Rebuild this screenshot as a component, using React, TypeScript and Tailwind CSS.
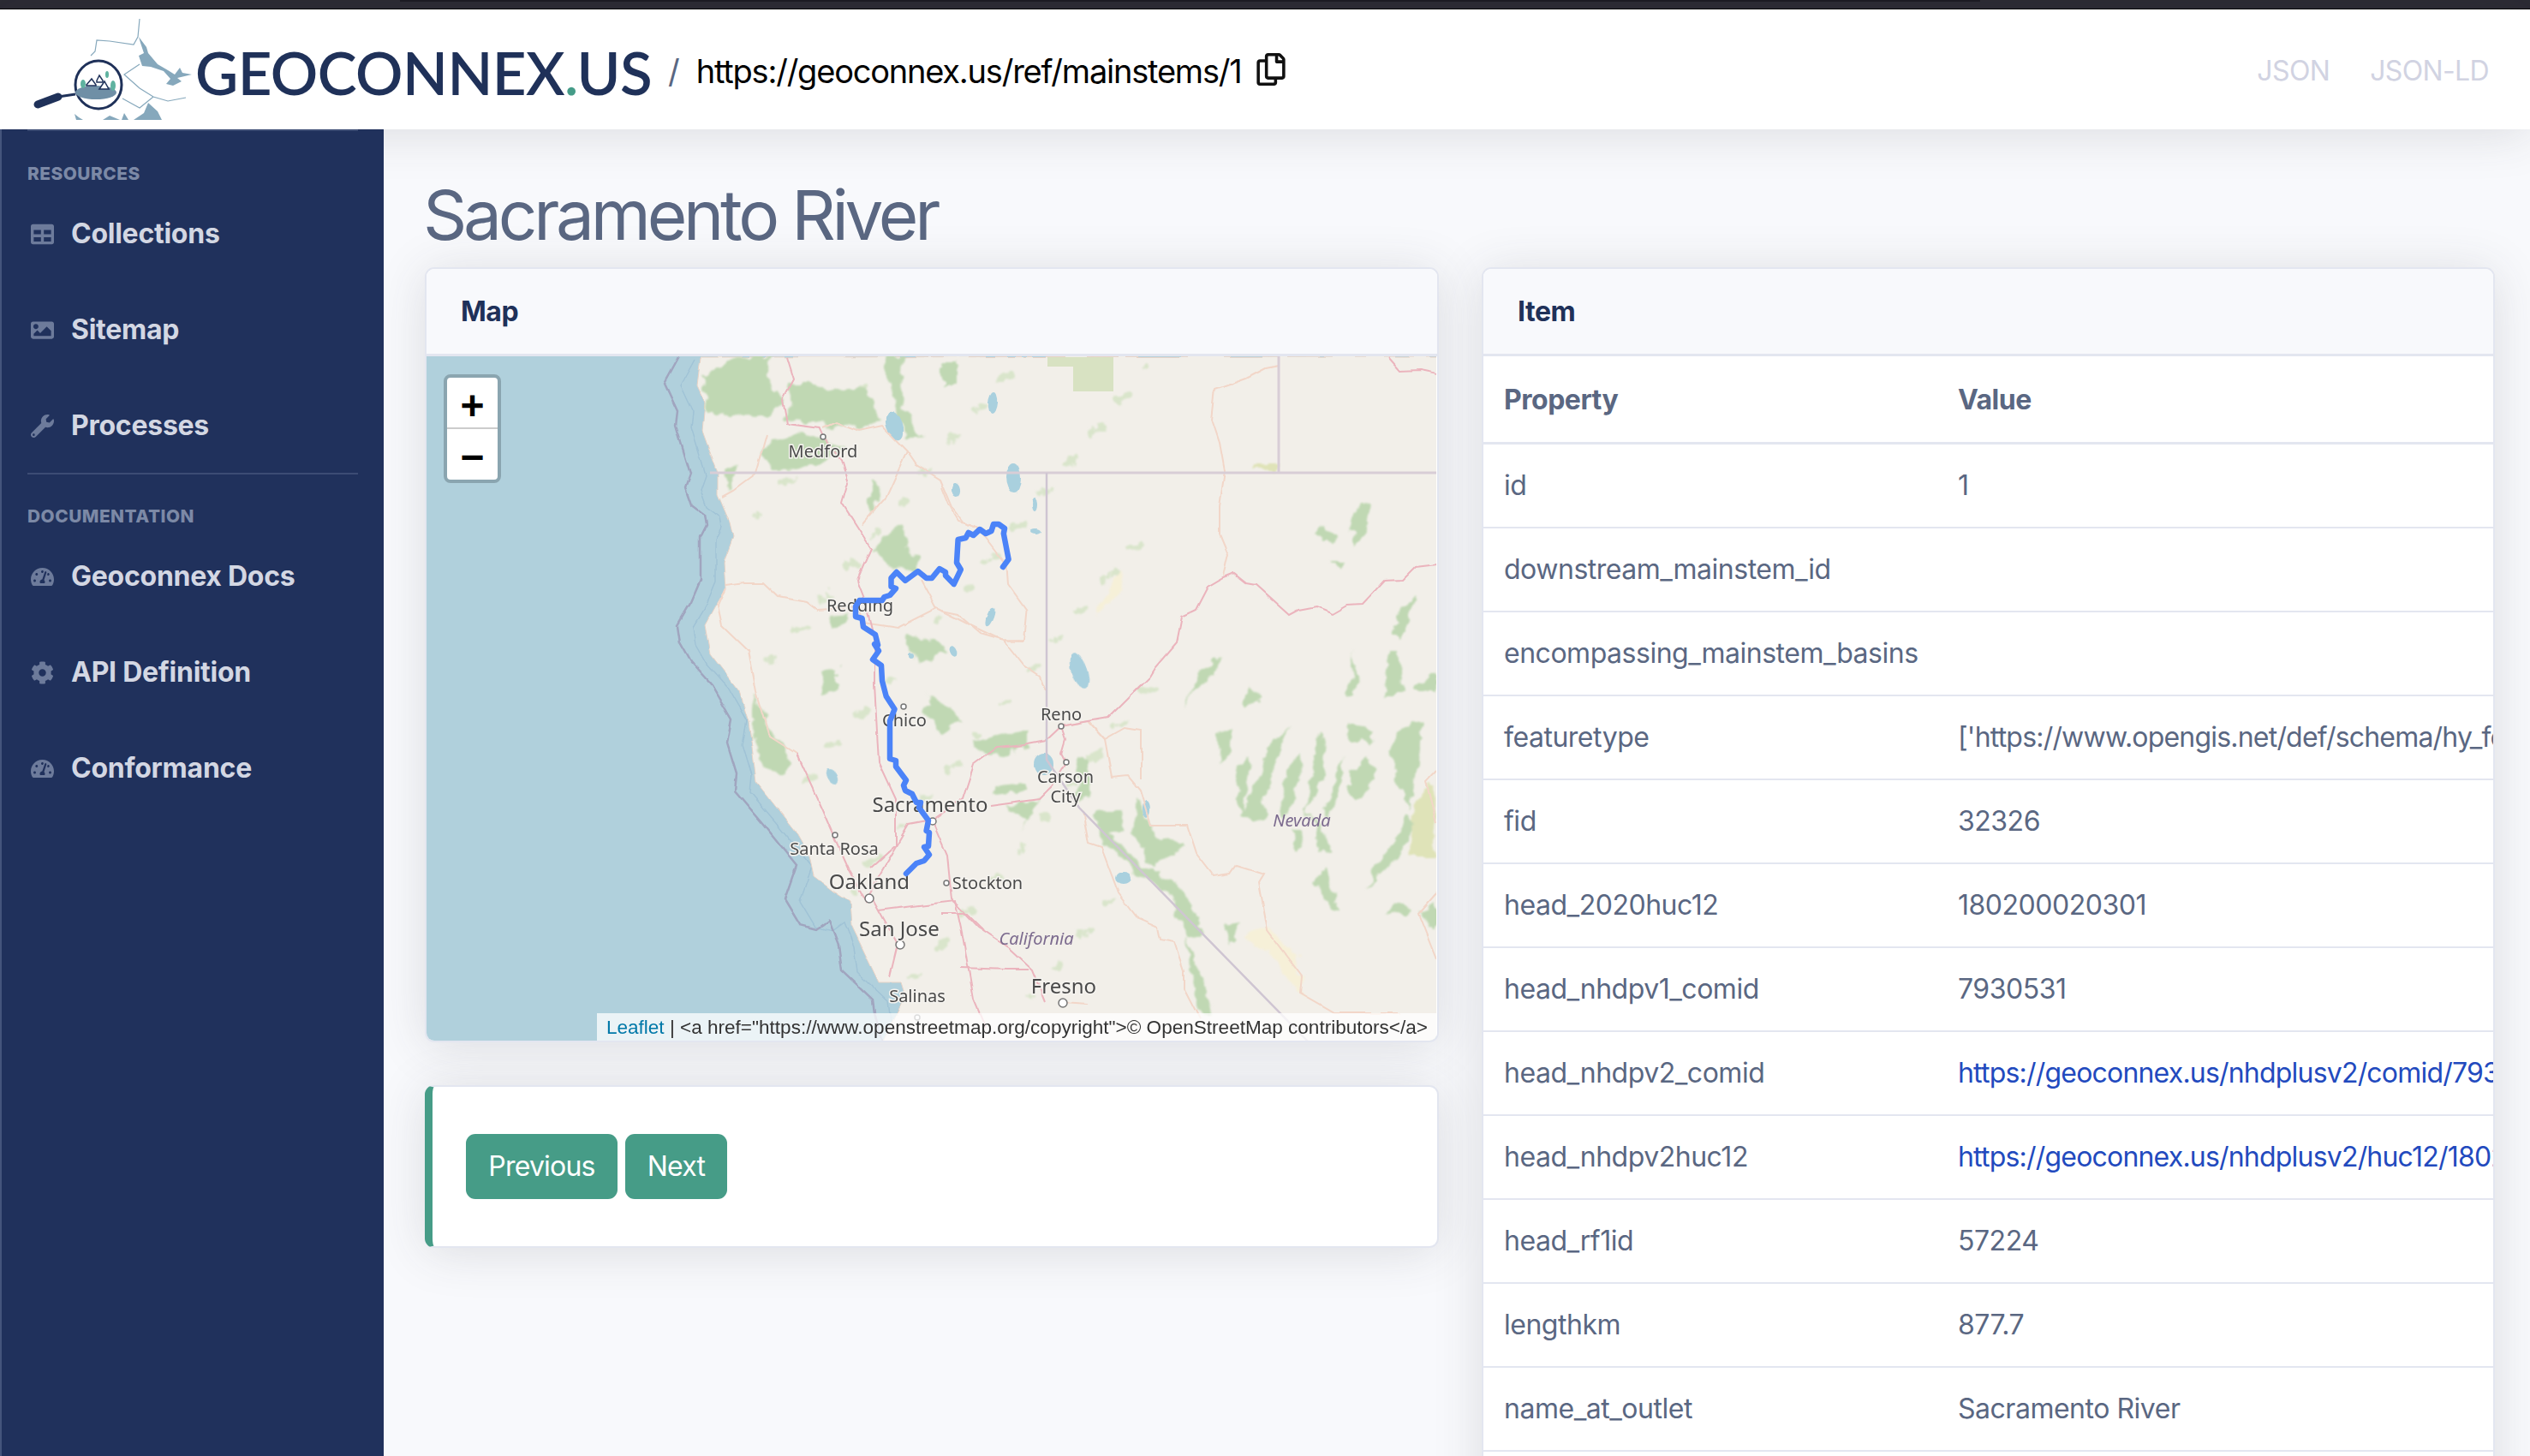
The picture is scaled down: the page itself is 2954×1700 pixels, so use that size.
import { FaCog, FaImage, FaRegCopy, FaTable, FaTachometerAlt, FaWrench } from 'react-icons/fa';

const resources = [
  { name: 'Collections', icon: FaTable },
  { name: 'Sitemap', icon: FaImage },
  { name: 'Processes', icon: FaWrench },
];

const docs = [
  { name: 'Geoconnex Docs', icon: FaTachometerAlt },
  { name: 'API Definition', icon: FaCog },
  { name: 'Conformance', icon: FaTachometerAlt },
];

const rows: { key: string; value?: string; link?: boolean; tight?: boolean }[] = [
  { key: 'id', value: '1' },
  { key: 'downstream_mainstem_id' },
  { key: 'encompassing_mainstem_basins' },
  { key: 'featuretype', value: "['https://www.opengis.net/def/schema/hy_features/hyf/HY_FlowPath']", tight: true },
  { key: 'fid', value: '32326' },
  { key: 'head_2020huc12', value: '180200020301' },
  { key: 'head_nhdpv1_comid', value: '7930531' },
  { key: 'head_nhdpv2_comid', value: 'https://geoconnex.us/nhdplusv2/comid/7930531', link: true, tight: true },
  { key: 'head_nhdpv2huc12', value: 'https://geoconnex.us/nhdplusv2/huc12/180200020301', link: true, tight: true },
  { key: 'head_rf1id', value: '57224' },
  { key: 'lengthkm', value: '877.7' },
  { key: 'name_at_outlet', value: 'Sacramento River' },
  { key: '' },
];

// map data, in page pixels
const land =
  '819,417 815,450 824,470 821,503 839,553 839,577 853,610 857,627 846,657 848,687 835,710 824,730 830,763 864,807 875,843 879,873 884,913 929,970 946,1000 951,1023 973,1040 993,1053 995,1080 1027,1147 1053,1147 1058,1163 1031,1218 1680,1218 1680,416';
const coast =
  '794,417 777,448 792,480 790,497 807,553 801,570 808,590 824,602 826,613 819,627 819,677 808,703 792,730 795,750 808,773 832,800 855,840 850,867 861,903 859,923 893,963 931,1010 917,1050 935,1080 955,1085 969,1075 980,1103 984,1133 1020,1167 1022,1183 1031,1218';
const river =
  '1172,662 1178.6,653 1172.8,623 1174,617 1167,612 1161,612 1158.5,620 1152,623 1145,618 1137.5,625 1131.7,622 1128.6,628 1119.6,630 1118,657 1122.8,665 1114.7,682 1105,672 1105,668 1098,664 1089,675 1082.6,675 1072.8,667 1058,678 1047.8,668 1041.5,675 1041.5,685 1047,687 1040,695 1033.5,697 1031,701 1004.5,701 1000,708 1000,720 1007.6,722 1009,732 1023,741 1026,753 1022,752 1027,760 1020,770 1030,777 1031,795 1035.7,813 1045.5,828 1040,842 1040,886 1047,888 1047,895 1059,911 1056,917 1058,923 1066,927 1071,937 1076,937 1074,943 1085,958 1082.6,970 1086,972 1085,988 1080,989 1086,998 1080,1005 1071,1008 1059,1020';

const pinkRoads = [
  '1326,807 1343,790 1349,780 1375,750 1381,720 1398,712 1412,685 1429,675 1442,670 1456,681 1467,683 1506,718 1517,712 1538,708 1557,716 1574.5,706 1592,705 1617,678 1638,677 1653,662 1678,659',
  '1622,417 1636,433 1659,432 1678,436',
  '920,417 928,443 915,467 920,495 957.6,500 962,510 984,540 991,563 984,587 1018,640 1002,677 1011,700 1022,743 1022,800 1027,890 1047,933 1047,987 1018,1013',
  '931,880 960,943 973,973 991,1013 1013,1053 1018,1047 1049,1103 1040,1140',
  '1013,1047 1062,963 1089,958 1125,933 1138,893 1165,873 1196,870 1222,865 1240,848 1272,842 1295,838 1333,800',
  '1089,958 1107,1000 1112,1050 1143,1083 1179,1107 1207,1133 1222,1170',
  '1027,1063 1116,1052 1125,1093 1138,1167 1152,1200',
  '1240,848 1245,863 1240,880 1245,890',
  '1157,940 1215,932 1230,917 1245,893',
  '1100,1067 1130,1067 1150,1087',
  '1123,1130 1177,1132 1203,1132',
];

const orangeRoads = [
  '1494,427 1479,430 1456,442 1420,455 1416,490 1425,517 1431,550 1425,590 1425,623 1435,647 1429,673',
  '1100,570 1108,590 1119,608 1142,615 1176.5,660 1178,683 1199.5,713 1196,747 1173,748 1146,740 1119,717 1100,713',
  '1173,748 1196,777 1215,790 1222,807',
  '962,500 978,493 1004,503 1031,497 1060,527 1036,580 1007,613',
  '1060,527 1071,543 1098,560 1112,593 1125,610 1147,617',
  '897,507 884,553 857,573 844,580',
  '848,687 839,707 844,730 875,760 884,807 900,860 931,880',
  '848,683 870,680 893,680 911,697 942,703 955,713 1004,710 1009,727 1049,733 1094,710 1076,677',
  '1094,710 1134,730 1170,747 1196,748',
  '1240,848 1272,842 1291,863 1314,850 1333,853 1333,910',
  '1272,842 1291,863 1299,907 1318,905 1333,923 1345,963 1387,963 1398,997 1418,1023 1437,1020 1444,1010 1477,1020 1471,1030 1481,1087 1521,1140 1519,1160 1559,1183 1636,1183',
  '1265,947 1272,985 1287,990 1307,1043 1330,1073 1353,1083 1356,1097 1372,1100 1383,1133 1383,1153 1402,1190',
  '1242,1170 1272,1172',
  '1678,900 1666,913 1678,960',
  '1678,1043 1657,1067 1678,1120',
];

const greens = [
  '821,437 844,427 853,417 900,417 895,440 913,470 893,490 870,482 853,490 826,477',
  '902,513 960,507 987,527 955,547 902,548 893,530',
  '924,447 951,447 991,457 1013,453 1031,487 996,500 946,493 920,490',
  '1031,417 1058,417 1054,473 1080,510 1058,510 1040,450',
  '1100,420 1117,420 1117,447 1100,447',
  '882,813 893,837 924,890 917,903 897,897 879,857',
  '1083,808 1123,840 1100,857 1080,827',
  '1058,740 1076,743 1107,757 1076,777 1062,763',
  '960,787 980,780 980,803 964,807',
  '1036,627 1054,613 1058,637 1071,650 1071,667 1036,660 1018,643',
  '971,720 991,718 987,730 971,735',
  '1018,558 1029,570 1025,593 1018,597',
  '844,542 862,543 850,573',
  '1134,867 1200,850 1200,877 1165,883 1138,873',
  '1161,917 1200,913 1200,923 1165,928',
  '1190,972 1215,935 1173,943 1199,957',
  '1255,883 1275,885 1275,925 1262,935',
  '1276,947 1307,947 1314,967 1291,970 1326,1000 1341,1013 1376,1030 1406,1090 1391,1093 1364,1043 1330,1020 1291,987',
  '1326,930 1337,950 1353,977 1387,988 1349,1013 1337,1000 1322,973',
  '1387,1090 1395,1120 1410,1143 1418,1183 1402,1183 1389,1133',
  '1429,1080 1452,1077 1444,1097 1435,1102',
  '1421,857 1441,847 1437,877 1425,893',
  '1441,907 1456,883 1460,900 1452,950 1446,943',
  '1506,847 1483,873 1456,940 1448,953 1475,957 1479,933 1498,867',
  '1517,877 1521,910 1502,957 1494,937 1506,900',
  '1540,857 1552,870 1548,903 1525,943 1536,950 1555,993 1540,997 1536,953 1523,947',
  '1571,883 1559,910 1548,947 1555,953 1569,913',
  '1573,847 1605,850 1597,870 1574,863',
  '1597,883 1609,897 1594,933 1578,933 1578,900',
  '1636,853 1662,843 1655,897 1647,943 1636,917 1624,880',
  '1643,953 1655,960 1636,997 1597,1035 1609,1010 1628,987',
  '1550,1013 1563,1060 1555,1062 1536,1030',
  '1620,1067 1640,1055 1651,1063 1636,1070',
  '1506,973 1525,973 1517,992',
  '1395,800 1383,827 1390,815',
  '1588,587 1601,588 1594,617 1596,630 1584,640 1578,610',
  '1540,617 1567,628 1555,637 1538,622',
  '1559,653 1571,653 1565,667',
  '1655,693 1657,700 1636,747 1624,743 1632,720',
  '1624,760 1636,760 1640,810 1617,810',
  '1582,757 1575,810 1584,810',
  '1425,768 1421,787 1391,810 1406,783',
  '1666,787 1678,780 1678,810 1651,810',
  '1460,800 1475,815 1450,830',
  '1660,1063 1678,1050 1678,1085',
];

const paleFields = [
  { points: '1464,543 1494,543 1494,550 1462,550', fill: '#dfe3b8' },
  { points: '1674,917 1678,1000 1647,1000 1655,933', fill: '#dfe3b8' },
  { points: '1483,1083 1517,1120 1525,1167 1483,1117 1452,1093', fill: '#f6f0d8' },
  { points: '1307,670 1314,687 1280,720 1291,693', fill: '#f6f0d8' },
];

const lakes = [
  [1045, 497, 9, 17, -20],
  [1185, 557, 9, 18, 0],
  [1261, 783, 9, 22, -20],
  [1220, 893, 12, 13, 0],
  [1340, 945, 4, 10, 0],
  [1312, 1025, 9, 7, 0],
  [973, 907, 6, 10, -30],
  [1160, 470, 5, 13, 5],
  [1117, 572, 5, 8, -10],
  [1210, 620, 6, 3, 0],
  [1209, 589, 3, 8, 0],
  [1157, 720, 4, 12, 20],
  [1114, 760, 4, 7, -20],
  [1064, 765, 3, 3, 0],
];

const labels = [
  { text: 'Medford', x: 962, y: 534, size: 20 },
  { text: 'Redding', x: 1005, y: 714, size: 20 },
  { text: 'Chico', x: 1057, y: 848, size: 20 },
  { text: 'Sacramento', x: 1087, y: 948, size: 24 },
  { text: 'Santa Rosa', x: 975, y: 998, size: 20 },
  { text: 'Oakland', x: 1016, y: 1038, size: 24 },
  { text: 'Stockton', x: 1154, y: 1038, size: 20 },
  { text: 'San Jose', x: 1051, y: 1093, size: 24 },
  { text: 'Salinas', x: 1072, y: 1170, size: 20 },
  { text: 'Reno', x: 1240, y: 841, size: 20 },
  { text: 'Carson', x: 1245, y: 914, size: 20 },
  { text: 'City', x: 1245, y: 937, size: 20 },
  { text: 'Fresno', x: 1243, y: 1160, size: 24 },
];

const cities = [
  [962, 510, 3],
  [1056, 825, 3],
  [976, 975, 3],
  [1106, 1031, 3],
  [1016, 1049, 5],
  [1052, 1103, 5],
  [1072, 1188, 3],
  [1240, 848, 3],
  [1246, 890, 3],
  [1242, 1171, 5],
  [1090, 959, 4],
];

// scattered pale patches, the mottled vegetation of the tiles; kept on the land side of the coast
const speckles = Array.from({ length: 170 }, (_, i) => {
  const x = 880 + ((i * 197) % 470);
  const y = 425 + ((i * 331) % 760);
  return { x, y, r: 2 + (i % 4) };
}).filter(s => s.x > 880 + Math.max(0, s.y - 850) * 0.6);

function RiverMap() {
  return (
    <svg viewBox="499 416 1179 799" className="block h-[799px] w-[1179px]">
      <defs>
        <filter id="soft">
          <feGaussianBlur stdDeviation="0.7" />
        </filter>
        <filter id="organic" x="-5%" y="-5%" width="110%" height="110%">
          <feTurbulence type="fractalNoise" baseFrequency="0.05" numOctaves="3" seed="4" result="noise" />
          <feDisplacementMap in="SourceGraphic" in2="noise" scale="18" xChannelSelector="R" yChannelSelector="G" />
          <feGaussianBlur stdDeviation="1" />
        </filter>
        <filter id="wiggle" x="-5%" y="-5%" width="110%" height="110%">
          <feTurbulence type="fractalNoise" baseFrequency="0.04" numOctaves="2" seed="9" result="noise" />
          <feDisplacementMap in="SourceGraphic" in2="noise" scale="6" xChannelSelector="R" yChannelSelector="G" />
          <feGaussianBlur stdDeviation="0.6" />
        </filter>
        <filter id="label">
          <feGaussianBlur stdDeviation="0.35" />
        </filter>
      </defs>
      <rect x="499" y="416" width="1179" height="799" fill="#b0d0dc" />
      <g filter="url(#wiggle)">
        <polyline points={coast} fill="none" stroke="#a0c3d6" strokeWidth="1.5" transform="translate(18,2)" />
        <polyline points={coast} fill="none" stroke="#a0a5bf" strokeWidth="2.5" />
        <polygon points={land} fill="#f2efe9" stroke="#e8d3c6" strokeWidth="1" />
      </g>
      <polygon points="1224,417 1301,417 1301,457 1254,457 1254,428 1224,428" fill="#d8e2c2" filter="url(#soft)" />
      <g filter="url(#organic)">
        {paleFields.map(f => (
          <polygon key={f.points} points={f.points} fill={f.fill} />
        ))}
        {speckles.map(s => (
          <circle key={`${s.x}-${s.y}`} cx={s.x} cy={s.y} r={s.r} fill="#d9e5cb" />
        ))}
        {greens.map(g => (
          <polygon key={g} points={g} fill="#c0d8b3" />
        ))}
      </g>
      <g filter="url(#wiggle)">
        {lakes.map(([cx, cy, rx, ry, r]) => (
          <ellipse
            key={`${cx}-${cy}`}
            cx={cx}
            cy={cy}
            rx={rx}
            ry={ry}
            fill="#a9d0de"
            transform={`rotate(${r} ${cx} ${cy})`}
          />
        ))}
        {orangeRoads.map(r => (
          <polyline key={r} points={r} fill="none" stroke="#f2d6c8" strokeWidth="2" />
        ))}
        {pinkRoads.map(r => (
          <polyline key={r} points={r} fill="none" stroke="#ebb4bd" strokeWidth="2" />
        ))}
      </g>
      <g filter="url(#soft)">
        <polyline points="830,552 1678,552" fill="none" stroke="#d8cdd6" strokeWidth="3" />
        <polyline points="1494,416 1494,552" fill="none" stroke="#d8cdd6" strokeWidth="3" />
        <polyline points="1223,552 1223,887 1261,943 1530,1218" fill="none" stroke="#cfc5d2" strokeWidth="2.5" />
      </g>
      <g filter="url(#label)">
        {cities.map(([cx, cy, r]) => (
          <circle key={`${cx}-${cy}`} cx={cx} cy={cy} r={r} fill="#fff" stroke="#777" strokeWidth="1.5" />
        ))}
        <g fontFamily="'Noto Sans', sans-serif" textAnchor="middle">
          {labels.map(l => (
            <text
              key={l.text}
              x={l.x}
              y={l.y}
              fontSize={l.size}
              fill="#4a4a4a"
              stroke="#f5f3ef"
              strokeWidth="3"
              paintOrder="stroke"
            >
              {l.text}
            </text>
          ))}
          <text x="1211" y="1103" fontSize="20" fontStyle="italic" fill="#7b6a8e">
            California
          </text>
          <text x="1521" y="965" fontSize="20" fontStyle="italic" fill="#7b6a8e">
            Nevada
          </text>
        </g>
      </g>
      <polyline
        points={river}
        fill="none"
        stroke="#4b83f8"
        strokeWidth="6.5"
        strokeLinecap="round"
        strokeLinejoin="round"
      />
    </svg>
  );
}

function Logo() {
  return (
    <svg viewBox="0 11 228 140" className="h-[140px] w-[228px] shrink-0">
      <g fill="none" stroke="#86a8bc" strokeWidth="1.2">
        <polyline points="163,22 161,43 156,52 128,48 113,47 111,60 106,65" />
        <polyline points="163,75 145,87 163,103 179,113 196,118 217,114" />
        <polyline points="143,115 163,126 179,113" />
      </g>
      <g fill="#86a8bc">
        <polygon points="162,43 171,55 173,62 184,75 196,82 204,87 210,79 213,85 224,87 207,91 212,95 202,100 194,98 199,92 191,83 176,78 166,77 162,65 168,62 164,50" />
        <polygon points="173,120 184,130 189,140 156,140 168,132" />
        <polygon points="120,140 128,135 140,140" />
        <polygon points="145,132 150,140 142,140" />
        <polygon points="87,133 92,137 97,140 89,140" />
      </g>
      <ellipse cx="115" cy="99" rx="27" ry="28" fill="#fff" stroke="#1f3159" strokeWidth="3" />
      <ellipse cx="112" cy="108" rx="24" ry="8" fill="#6f8fa6" />
      <g fill="#fff" stroke="#1f3159" strokeWidth="1.5">
        <polygon points="101,99 107,92 112,99 112,100 101,100" />
        <polygon points="113,94 116,88 120,94 120,96 113,96" />
        <polygon points="116,104 122,95 127,104" />
      </g>
      <g fill="#5fb3a0">
        <ellipse cx="97" cy="98" rx="3" ry="5" />
        <ellipse cx="132" cy="100" rx="3" ry="6" />
        <ellipse cx="125" cy="87" rx="2" ry="4" />
      </g>
      <polyline points="44,122 68,113" fill="none" stroke="#1f3159" strokeWidth="9" strokeLinecap="round" />
      <polyline points="68,113 88,110" fill="none" stroke="#1f3159" strokeWidth="3" />
    </svg>
  );
}

function NavItem({ name, icon: Icon }: { name: string; icon: typeof FaTable }) {
  return (
    <a className="flex h-[112px] items-center pl-[32px] text-[32px] font-bold tracking-[-0.008em] text-[#d3d7e3]">
      <span className="flex w-[34px] justify-center text-[#6d7b9b]">
        <Icon size={27} />
      </span>
      <span className="ml-[17px]">{name}</span>
    </a>
  );
}

function CardHeader({ title }: { title: string }) {
  return (
    <div className="flex h-[102px] items-center border-b-[3px] border-[#e3e6f0] bg-[#f8f9fc] px-[40px] text-[32px] font-bold tracking-[-0.015em] text-[#1f3159]">
      {title}
    </div>
  );
}

export default function App() {
  return (
    <div className="flex h-[1700px] flex-col overflow-hidden bg-[#f8f9fc] font-['Inter',sans-serif]">
      <div className="h-[11px] shrink-0 border-b border-black bg-[#2b2a33]">
        <div className="ml-[467px] h-[2px] w-[1845px] bg-[#1c1b22]" />
      </div>

      {/* Top bar */}
      <header className="relative z-10 flex h-[140px] shrink-0 items-center bg-white pr-[48px] shadow-[0_5px_56px_0_rgba(58,59,69,0.15)]">
        <Logo />
        <div className="translate-y-[3px] font-['Lato',sans-serif] text-[69px] leading-none font-semibold tracking-[-0.008em] text-[#1f3159]">
          GEOCONNEX<span className="text-[#459c88]">.</span>US
        </div>
        <span className="ml-[19px] translate-y-[2px] text-[38px] text-[#5a6782]">/</span>
        <span className="ml-[19px] translate-y-[2px] text-[38px] tracking-[-0.032em] text-black">
          https://geoconnex.us/ref/mainstems/1
        </span>
        <FaRegCopy size={38} className="ml-[16px] text-[#111]" />
        <nav className="ml-auto flex translate-y-[2px] gap-[47px] text-[32px] tracking-[-0.02em] text-[#d1d3e2]">
          <a>JSON</a>
          <a>JSON-LD</a>
        </nav>
      </header>

      <div className="flex min-h-0 flex-1">
        {/* Sidebar */}
        <aside className="relative z-20 w-[448px] shrink-0 border-l-2 border-[#45557c] bg-[#20315c]">
          <div className="mx-[30px] h-[2px] bg-[#3c4c74]" />
          <div className="pt-[37px] pl-[30px] text-[20.8px] leading-[25px] font-extrabold tracking-[0.025em] text-[#7c89a6] uppercase">
            Resources
          </div>
          <div className="mt-[2px] -ml-[2px]">
            {resources.map(item => (
              <NavItem key={item.name} {...item} />
            ))}
          </div>
          <div className="mx-[30px] -mt-[1px] h-[2px] bg-[#3c4c74]" />
          <div className="pt-[36px] pl-[30px] text-[20.8px] leading-[25px] font-extrabold tracking-[0.025em] text-[#7c89a6] uppercase">
            Documentation
          </div>
          <div className="mt-[2px] -ml-[2px]">
            {docs.map(item => (
              <NavItem key={item.name} {...item} />
            ))}
          </div>
        </aside>

        {/* Content */}
        <main className="min-w-0 flex-1 pt-[52px] pr-[41px] pl-[48px]">
          <h1 className="-ml-[2px] text-[80px] leading-[96px] font-normal tracking-[-0.053em] text-[#5a6782]">
            Sacramento River
          </h1>
          <div className="mt-[13px] grid grid-cols-[1184px_1183px] gap-[50px]">
            <div>
              <section className="overflow-hidden rounded-[11px] border-2 border-[#e3e6f0] bg-white shadow-[0_5px_56px_0_rgba(58,59,69,0.15)]">
                <CardHeader title="Map" />
                <div className="relative">
                  <RiverMap />
                  <div className="absolute top-[21px] left-[20px] w-[67px] overflow-hidden rounded-[8px] border-[4px] border-[#8aa5b0] bg-white text-black">
                    <div className="flex h-[60px] items-center justify-center border-b-2 border-[#ccc] pt-[8px] font-['Liberation_Sans',sans-serif] text-[48px] leading-none font-bold">
                      +
                    </div>
                    <div className="flex h-[59px] items-center justify-center pt-[6px] font-['Liberation_Sans',sans-serif] text-[48px] leading-none font-bold">
                      −
                    </div>
                  </div>
                  <div className="absolute right-0 bottom-0 flex h-[32px] items-center bg-white/75 pt-[2px] pr-[11px] pl-[11px] font-['Liberation_Sans',sans-serif] text-[22.55px] whitespace-nowrap text-[#333]">
                    <a className="text-[#0078a8]">Leaflet</a>
                    <span>&nbsp;|&nbsp;</span>
                    <span>{'<a href="https://www.openstreetmap.org/copyright">© OpenStreetMap contributors</a>'}</span>
                  </div>
                </div>
              </section>

              <section className="mt-[50px] flex h-[190px] items-center gap-[9px] rounded-[11px] border-2 border-l-[9px] border-[#e3e6f0] border-l-[#469c87] bg-white pl-[39px] shadow-[0_5px_56px_0_rgba(58,59,69,0.15)]">
                <button className="h-[76px] w-[177px] rounded-[11px] bg-[#469c87] text-[32px] tracking-[-0.025em] text-white">
                  Previous
                </button>
                <button className="h-[76px] w-[119px] rounded-[11px] bg-[#469c87] text-[32px] tracking-[-0.025em] text-white">
                  Next
                </button>
              </section>
            </div>

            <section className="h-[1600px] overflow-hidden rounded-[11px] border-2 border-[#e3e6f0] bg-white shadow-[0_5px_56px_0_rgba(58,59,69,0.15)]">
              <CardHeader title="Item" />
              <table className="w-full table-fixed border-separate border-spacing-0 text-left text-[32px] tracking-[-0.015em] whitespace-nowrap text-[#5a6782]">
                <colgroup>
                  <col className="w-[530px]" />
                  <col />
                </colgroup>
                <thead>
                  <tr>
                    <th className="h-[103px] border-b-[3px] border-[#e3e6f0] pt-[2px] pl-[24px] font-bold">Property</th>
                    <th className="h-[103px] border-b-[3px] border-[#e3e6f0] pt-[2px] pl-[24px] font-bold">Value</th>
                  </tr>
                </thead>
                <tbody>
                  {rows.map(row => (
                    <tr key={row.key || 'next'}>
                      <td className="h-[98px] border-b-2 border-[#e3e6f0] pl-[24px]">{row.key}</td>
                      <td className="h-[98px] border-b-2 border-[#e3e6f0] pl-[24px]">
                        <span className={row.tight ? 'tracking-[-0.025em]' : undefined}>
                          {row.link ? <a className="text-[#224abe]">{row.value}</a> : row.value}
                        </span>
                      </td>
                    </tr>
                  ))}
                </tbody>
              </table>
            </section>
          </div>
        </main>
      </div>
    </div>
  );
}
